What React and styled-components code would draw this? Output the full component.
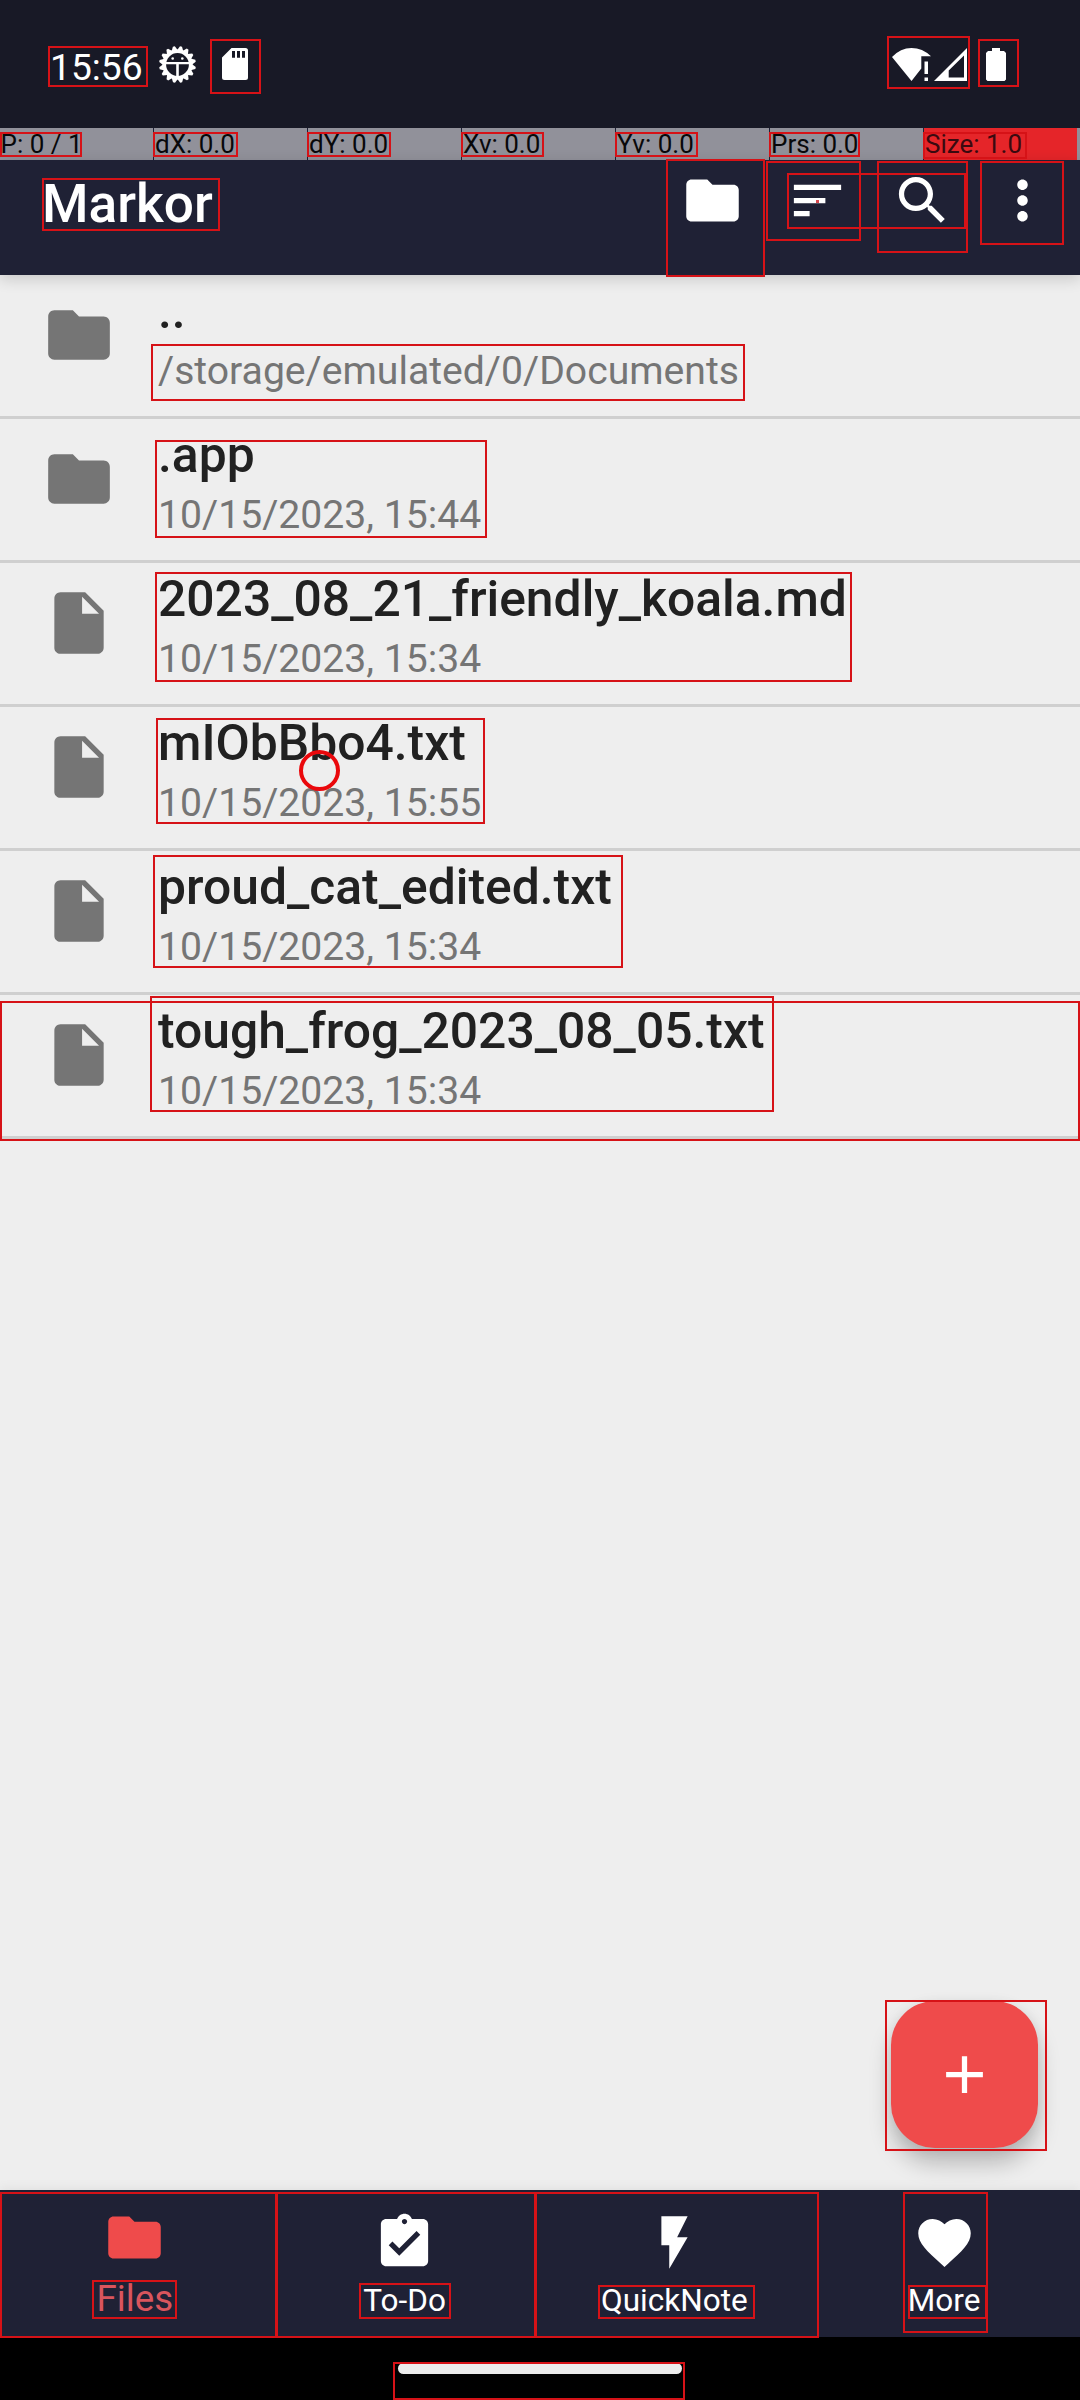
import React from 'react';
import styled, { createGlobalStyle } from 'styled-components';

const GlobalStyle = createGlobalStyle`
  *, *::before, *::after { box-sizing: border-box; }
  body { margin: 0; background: #000; }
`;

const Screen = styled.div`
  position: relative;
  display: flex;
  flex-direction: column;
  width: 1080px;
  height: 2400px;
  overflow: hidden;
  background: #eeeeee;
  font-family: Roboto, "Liberation Sans", sans-serif;
`;

const StatusBar = styled.header`
  flex: none;
  display: flex;
  align-items: center;
  height: 128px;
  padding: 0 74px 0 50px;
  background: #181926;
  color: #fff;
`;

const Clock = styled.span`
  width: 109px;
  font-size: 37.2px;
  line-height: 44px;
  margin-top: 6px;
`;

const StatusGroup = styled.div`
  display: flex;
  align-items: center;
  gap: ${(p) => p.$gap}px;
  margin-left: ${(p) => (p.$end ? 'auto' : 0)};
`;

const Icon = styled.svg`
  display: block;
  flex: none;
  width: ${(p) => p.$w}px;
  height: ${(p) => p.$h || p.$w}px;
  fill: currentColor;
`;

const PointerBar = styled.div`
  flex: none;
  display: grid;
  grid-template-columns: 153px repeat(5, 154px) 154px 3px;
  height: 32px;
  background: #91919a;
`;

const PointerCell = styled.span`
  padding-left: ${(p) => (p.$first ? 0.5 : 1)}px;
  border-left: ${(p) => (p.$first ? 0 : 1)}px solid #1f2135;
  font-size: 26px;
  line-height: 33px;
  white-space: pre;
  color: ${(p) => (p.$alert ? '#3a0a10' : '#08080a')};
  background: ${(p) => (p.$alert ? '#e52529' : 'transparent')};
`;

const AppBar = styled.div`
  flex: none;
  position: relative;
  display: flex;
  align-items: flex-start;
  height: 115px;
  padding: 9px 26px 0 42px;
  background: #1f2135;
  color: #fff;
  box-shadow: 0 4px 14px rgba(0, 0, 0, 0.16);
`;

const Title = styled.h1`
  flex: 1;
  margin: 4px 0 0;
  font-size: 53.2px;
  font-weight: 500;
  line-height: 62px;
`;

const Actions = styled.div`
  display: flex;
  gap: 42px;
`;

const OverflowAction = styled.div`
  margin-left: -5px;
`;

const FileList = styled.main`
  flex: 1;
  display: flex;
  flex-direction: column;
`;

const FileRow = styled.div`
  display: flex;
  height: 144px;
  padding-left: 42px;
  border-bottom: 3px solid #cfcfcf;
  color: #757575;
`;

const RowIcon = styled.div`
  width: 116px;
  padding-top: 23px;
`;

const RowText = styled.div`
  display: flex;
  flex-direction: column;
  padding-top: 7px;
`;

const FileName = styled.span`
  font-size: 49.8px;
  font-weight: 500;
  line-height: 58px;
  color: #212121;
`;

const FileInfo = styled.span`
  margin-top: 8px;
  font-size: 39.15px;
  line-height: 46px;
`;

const Fab = styled.button`
  position: absolute;
  left: 891px;
  top: 2001px;
  display: flex;
  align-items: center;
  justify-content: center;
  width: 147px;
  height: 147px;
  padding: 0;
  border: 0;
  border-radius: 44px;
  background: #ef4b4b;
  color: #fff;
  box-shadow: 0 16px 22px rgba(0, 0, 0, 0.22), 0 2px 14px rgba(0, 0, 0, 0.08);
`;

const BottomNav = styled.nav`
  flex: none;
  position: relative;
  display: grid;
  grid-template-columns: repeat(4, 1fr);
  height: 147px;
  padding-right: 1px;
  background: #1f2135;
  box-shadow: 0 -2px 10px rgba(0, 0, 0, 0.06);
`;

const NavItem = styled.div`
  display: flex;
  flex-direction: column;
  align-items: center;
  justify-content: space-between;
  padding: ${(p) => (p.$active ? '16px 0 15px' : '21px 0 17px')};
  color: ${(p) => (p.$active ? '#ef4b4b' : '#fff')};
`;

const NavLabel = styled.span`
  font-size: ${(p) => (p.$active ? 36.75 : 31.5)}px;
  line-height: ${(p) => (p.$active ? 46 : 38)}px;
  color: ${(p) => (p.$active ? '#d9555d' : '#fff')};
`;

const GestureBar = styled.footer`
  flex: none;
  display: flex;
  justify-content: center;
  height: 63px;
  padding-top: 26px;
  background: #000;
`;

const GestureHandle = styled.div`
  width: 284px;
  height: 11px;
  border-radius: 6px;
  background: #ececec;
`;

const Bounds = styled.div`
  position: absolute;
  left: ${(p) => p.$box[0]}px;
  top: ${(p) => p.$box[1]}px;
  width: ${(p) => p.$box[2] - p.$box[0]}px;
  height: ${(p) => p.$box[3] - p.$box[1]}px;
  border: 2px solid #d61217;
  pointer-events: none;
`;

const TouchRing = styled.div`
  position: absolute;
  left: 299px;
  top: 749.5px;
  width: 41px;
  height: 41px;
  border: 4px solid #ea080c;
  border-radius: 50%;
`;

const TouchDot = styled.div`
  position: absolute;
  left: 816px;
  top: 200px;
  width: 3px;
  height: 3px;
  background: #d8484e;
`;

const paths = {
  folder: 'M10 4H4c-1.1 0-1.99.9-1.99 2L2 18c0 1.1.9 2 2 2h16c1.1 0 2-.9 2-2V8c0-1.1-.9-2-2-2h-8l-2-2z',
  file: 'M6 2c-1.1 0-1.99.9-1.99 2L4 20c0 1.1.89 2 1.99 2H18c1.1 0 2-.9 2-2V8l-6-6H6zm7 7V3.5L18.5 9H13z',
  sort: 'M3 18h6v-2H3v2zM3 6v2h18V6H3zm0 7h12v-2H3v2z',
  search: 'M15.5 14h-.79l-.28-.27C15.41 12.59 16 11.11 16 9.5 16 5.91 13.09 3 9.5 3S3 5.91 3 9.5 5.91 16 9.5 16c1.61 0 3.09-.59 4.23-1.57l.27.28v.79l5 4.99L20.49 19l-4.99-5zm-6 0C7.01 14 5 11.99 5 9.5S7.01 5 9.5 5 14 7.01 14 9.5 11.99 14 9.5 14z',
  more: 'M12 8c1.1 0 2-.9 2-2s-.9-2-2-2-2 .9-2 2 .9 2 2 2zm0 2c-1.1 0-2 .9-2 2s.9 2 2 2 2-.9 2-2-.9-2-2-2zm0 6c-1.1 0-2 .9-2 2s.9 2 2 2 2-.9 2-2-.9-2-2-2z',
  todo: 'M19 3h-4.18C14.4 1.84 13.3 1 12 1c-1.3 0-2.4.84-2.82 2H5c-1.1 0-2 .9-2 2v14c0 1.1.9 2 2 2h14c1.1 0 2-.9 2-2V5c0-1.1-.9-2-2-2zm-7 0c.55 0 1 .45 1 1s-.45 1-1 1-1-.45-1-1 .45-1 1-1zm-2 14l-4-4 1.41-1.41L10 14.17l6.59-6.59L18 9l-8 8z',
  flash: 'M7 2v11h3v9l7-12h-4l4-8z',
  heart: 'M12 21.35l-1.45-1.32C5.4 15.36 2 12.28 2 8.5 2 5.42 4.42 3 7.5 3c1.74 0 3.41.81 4.5 2.09C13.09 3.81 14.76 3 16.5 3 19.58 3 22 5.42 22 8.5c0 3.78-3.4 6.86-8.55 11.54L12 21.35z',
  add: 'M19 13h-6v6h-2v-6H5v-2h6V5h2v6h6v2z',
};

const Glyph = ({ name, size = 63 }) => (
  <Icon $w={size} viewBox="0 0 24 24">
    <path d={paths[name]} />
  </Icon>
);

const TEETH = 16;

const GearIcon = () => (
  <Icon $w={37} viewBox="-18.5 -18.5 37 37">
    {Array.from({ length: TEETH }, (_, i) => (
      <path key={i} d="M-3.2 -14L-1 -18.4H1L3.2 -14Z" transform={`rotate(${(i * 360) / TEETH + 11})`} />
    ))}
    <circle r="13.2" fill="none" stroke="currentColor" strokeWidth="3.6" />
    <path d="M-12.5 -2.4H12.5V-0.2H1.3V13H-1.3V-0.2H-12.5Z" />
    <circle cx="-4.8" cy="-6" r="1.3" />
    <circle cx="4.8" cy="-6" r="1.3" />
  </Icon>
);

const SdIcon = () => (
  <Icon $w={26} $h={32} viewBox="0 0 26 32">
    <path
      fillRule="evenodd"
      d="M9.5 0H23.5Q26 0 26 2.5V29.5Q26 32 23.5 32H2.5Q0 32 0 29.5V9.5ZM10 3V9.7H13V3ZM15 3V9.7H18V3ZM20 3V9.7H23V3Z"
    />
  </Icon>
);

const WifiIcon = () => (
  <Icon $w={39} $h={33} viewBox="0 0 39 33">
    <path d="M0 9Q8.500 0 19.500 0Q30.500 0 39 8.300H29.300V20.500L19.500 33Z" />
    <path d="M32.500 13.500H36V26H32.500ZM32.500 29.500H36V33H32.500Z" />
  </Icon>
);

const SignalIcon = () => (
  <Icon $w={33} $h={33} viewBox="0 0 33 33">
    <path fillRule="evenodd" d="M0 33L33 0V33ZM14.700 22.500V29.500H30V7.500Z" />
  </Icon>
);

const BatteryIcon = () => (
  <Icon $w={20} $h={33} viewBox="0 0 20 33">
    <path d="M6 0H14V3H18L20 5V31.500L18.500 33H1.500L0 31.500V5L2 3H6Z" />
  </Icon>
);

const pointer = ['P: 0 / 1', 'dX: 0.0', 'dY: 0.0', 'Xv: 0.0', 'Yv: 0.0', 'Prs: 0.0', 'Size: 1.0'];

const files = [
  { icon: 'folder', name: '..', info: '/storage/emulated/0/Documents' },
  { icon: 'folder', name: '.app', info: '10/15/2023, 15:44' },
  { icon: 'file', name: '2023_08_21_friendly_koala.md', info: '10/15/2023, 15:34' },
  { icon: 'file', name: 'mIObBbo4.txt', info: '10/15/2023, 15:55' },
  { icon: 'file', name: 'proud_cat_edited.txt', info: '10/15/2023, 15:34' },
  { icon: 'file', name: 'tough_frog_2023_08_05.txt', info: '10/15/2023, 15:34' },
];

const tabs = [
  { icon: 'folder', label: 'Files', active: true },
  { icon: 'todo', label: 'To-Do' },
  { icon: 'flash', label: 'QuickNote' },
  { icon: 'heart', label: 'More' },
];

// left, top, right, bottom of every outlined element
const bounds = [
  [48, 46, 148, 87], [210, 39, 261, 94], [887, 36, 970, 89], [978, 39, 1019, 87],
  [0, 132, 82, 157], [153, 132, 238, 157], [307, 132, 391, 157], [461, 132, 544, 157],
  [615, 132, 698, 157], [769, 132, 860, 157], [923, 132, 1027, 159],
  [42, 178, 220, 231], [666, 159, 765, 277], [766, 161, 861, 241], [787, 173, 966, 229],
  [877, 161, 968, 253], [980, 161, 1064, 245],
  [151, 344, 745, 401], [155, 440, 487, 538], [155, 572, 852, 682], [156, 718, 485, 824],
  [153, 855, 623, 968], [0, 1001, 1080, 1141], [150, 996, 774, 1112],
  [885, 2000, 1047, 2151],
  [0, 2192, 277, 2338], [276, 2192, 536, 2338], [535, 2192, 819, 2338], [903, 2192, 988, 2333],
  [92, 2280, 177, 2319], [359, 2283, 451, 2319], [598, 2285, 755, 2319], [908, 2285, 987, 2319],
  [393, 2362, 685, 2400],
];

export default function App() {
  return (
    <>
      <GlobalStyle />
      <Screen>
        <StatusBar>
          <Clock>15:56</Clock>
          <StatusGroup $gap={26}>
            <GearIcon />
            <SdIcon />
          </StatusGroup>
          <StatusGroup $gap={19} $end>
            <StatusGroup $gap={3}>
              <WifiIcon />
              <SignalIcon />
            </StatusGroup>
            <BatteryIcon />
          </StatusGroup>
        </StatusBar>
        <PointerBar>
          {pointer.map((label, i) => (
            <PointerCell key={label} $first={i === 0} $alert={i === 6}>{label}</PointerCell>
          ))}
        </PointerBar>
        <AppBar>
          <Title>Markor</Title>
          <Actions>
            <Glyph name="folder" />
            <Glyph name="sort" />
            <Glyph name="search" />
            <OverflowAction>
              <Glyph name="more" />
            </OverflowAction>
          </Actions>
        </AppBar>
        <FileList>
          {files.map((f) => (
            <FileRow key={f.name}>
              <RowIcon>
                <Glyph name={f.icon} size={74} />
              </RowIcon>
              <RowText>
                <FileName>{f.name}</FileName>
                <FileInfo>{f.info}</FileInfo>
              </RowText>
            </FileRow>
          ))}
        </FileList>
        <Fab aria-label="New">
          <Glyph name="add" />
        </Fab>
        <BottomNav>
          {tabs.map((t) => (
            <NavItem key={t.label} $active={t.active}>
              <Glyph name={t.icon} />
              <NavLabel $active={t.active}>{t.label}</NavLabel>
            </NavItem>
          ))}
        </BottomNav>
        <GestureBar>
          <GestureHandle />
        </GestureBar>
        {bounds.map((box) => (
          <Bounds key={box.join()} $box={box} />
        ))}
        <TouchRing />
        <TouchDot />
      </Screen>
    </>
  );
}
